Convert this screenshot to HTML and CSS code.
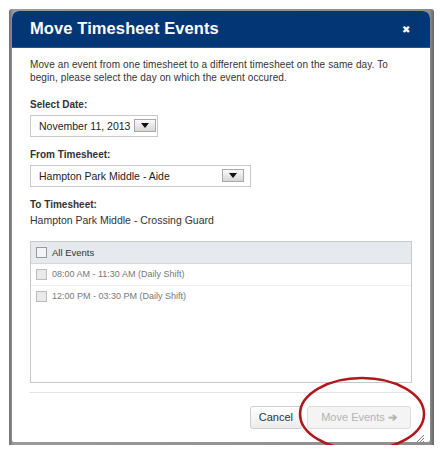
FILE: index.html
```html
<!DOCTYPE html>
<html lang="en">
<head>
    <meta charset="UTF-8">
    <meta name="viewport" content="width=device-width, initial-scale=1.0">
    <title>Move Timesheet Events</title>
    <link rel="stylesheet" href="styles.css">
</head>
<body>
    <div class="frame">
        <div class="dialog">
            <header class="dialog-head">
                <h1>Move Timesheet Events</h1>
                <span class="close">&#x2716;</span>
            </header>

            <div class="dialog-body">
                <p class="intro">Move an event from one timesheet to a different timesheet on the same day. To begin, please select the day on which the event occured.</p>

                <label class="field-label">Select Date:</label>
                <div class="select select-date">
                    <span>November 11, 2013</span>
                    <span class="arrow"></span>
                </div>

                <label class="field-label">From Timesheet:</label>
                <div class="select select-sheet">
                    <span>Hampton Park Middle - Aide</span>
                    <span class="arrow"></span>
                </div>

                <label class="field-label">To Timesheet:</label>
                <div class="to-value">Hampton Park Middle - Crossing Guard</div>

                <div class="events">
                    <div class="events-head">
                        <span class="check"></span>All Events
                    </div>
                    <div class="event-row">
                        <span class="check faded"></span>08:00 AM - 11:30 AM (Daily Shift)
                    </div>
                    <div class="event-row">
                        <span class="check faded"></span>12:00 PM - 03:30 PM (Daily Shift)
                    </div>
                </div>
            </div>

            <footer class="dialog-foot">
                <button class="btn">Cancel</button>
                <button class="btn btn-disabled">Move Events <span class="go">&#x2794;</span></button>
                <svg class="grip" width="9" height="9" viewBox="0 0 9 9">
                    <path d="M8 1 L1 8 M8 4 L4 8 M8 7 L7 8" stroke="#777" stroke-width="1"/>
                </svg>
            </footer>
        </div>

        <!-- hand-drawn circle round the move button -->
        <svg class="ring" width="136" height="82" viewBox="0 0 136 82">
            <ellipse cx="68" cy="41" rx="62" ry="36" fill="none" stroke="#b3161b" stroke-width="2.5"/>
        </svg>
    </div>
</body>
</html>
```

FILE: styles.css
```css
body {
    margin: 0;
    background: #fff;
    font-family: "Liberation Sans", Arial, sans-serif;
    color: #333;
}

.frame {
    position: relative;
    margin: 9px 9px 0 9px;
    padding: 2px 4px 3px 3px;
    background: linear-gradient(to right, #6f6f6f, #9a9a9a 1%, #8d8d8d 99%, #666);
    border-radius: 3px 3px 0 0;
}

.dialog {
    background: #fff;
    border-radius: 7px 7px 2px 2px;
    overflow: hidden;
    height: 431px;
    display: flex;
    flex-direction: column;
}

.dialog-head {
    background: #033675;
    height: 38px;
    display: flex;
    align-items: center;
    justify-content: space-between;
    padding: 0 20px 0 18px;
    border-bottom: 1px solid #2a5690;
}

.dialog-head h1 {
    margin: 0;
    color: #fff;
    font-size: 16.5px;
    font-weight: bold;
    letter-spacing: 0.1px;
}

.close {
    color: #fff;
    font-size: 10px;
    margin-top: 2px;
}

.dialog-body {
    padding: 10px 18px 0 18px;
    flex: 1;
}

.intro {
    margin: 0 0 15px 0;
    font-size: 10px;
    line-height: 13px;
    letter-spacing: 0.1px;
}

.field-label {
    display: block;
    font-size: 10px;
    font-weight: bold;
    color: #333;
    margin-bottom: 5px;
}

.select {
    display: flex;
    align-items: center;
    justify-content: space-between;
    border: 1px solid #c9c9c9;
    height: 20px;
    padding: 0 4px 0 8px;
    font-size: 10.5px;
    color: #222;
    margin-bottom: 12px;
    white-space: nowrap;
}

.select-date {
    width: 114px;
    gap: 4px;
}

.select-sheet {
    width: 205px;
    padding-right: 6px;
}

.arrow {
    flex: none;
    width: 20px;
    height: 11px;
    border: 1px solid #a8a8a8;
    background: linear-gradient(#fafafa, #d6d6d6);
    position: relative;
}

.arrow::after {
    content: "";
    position: absolute;
    left: 6px;
    top: 3px;
    border-left: 4px solid transparent;
    border-right: 4px solid transparent;
    border-top: 5px solid #111;
}

.to-value {
    font-size: 10.5px;
    margin-top: -1px;
    margin-bottom: 15px;
}

.events {
    border: 1px solid #c8c8c8;
    height: 140px;
}

.events-head {
    background: #e6eaee;
    height: 21px;
    display: flex;
    align-items: center;
    padding-left: 5px;
    font-size: 9.5px;
    color: #333;
    border-bottom: 1px solid #d4d8dc;
}

.event-row {
    height: 21px;
    display: flex;
    align-items: center;
    padding-left: 5px;
    font-size: 9px;
    color: #777;
    border-bottom: 1px solid #eee;
}

.event-row:last-child {
    border-bottom: none;
}

.check {
    width: 9px;
    height: 9px;
    border: 1px solid #999;
    background: #f4f4f4;
    margin-right: 5px;
}

.check.faded {
    border-color: #bbb;
    background: #e9e9e9;
}

.dialog-foot {
    position: relative;
    margin: 9px 18px 0 17px;
    border-top: 1px solid #e4e4e4;
    height: 52px;
    display: flex;
    justify-content: flex-end;
    align-items: center;
    gap: 5px;
    padding-right: 1px;
}

.btn {
    font-family: "Liberation Sans", Arial, sans-serif;
    font-size: 11px;
    height: 23px;
    padding: 0 8px;
    border: 1px solid #cfcfcf;
    border-radius: 3px;
    background: linear-gradient(#fff, #ececec);
    color: #333;
}

.btn-disabled {
    color: #b3b3b3;
    width: 104px;
    background: #f4f4f4;
    border-color: #dcdcdc;
}

.go {
    font-size: 11px;
    font-weight: bold;
}

.grip {
    position: absolute;
    right: -13px;
    bottom: -1px;
}

.ring {
    position: absolute;
    left: 285px;
    top: 364px;
}
```
